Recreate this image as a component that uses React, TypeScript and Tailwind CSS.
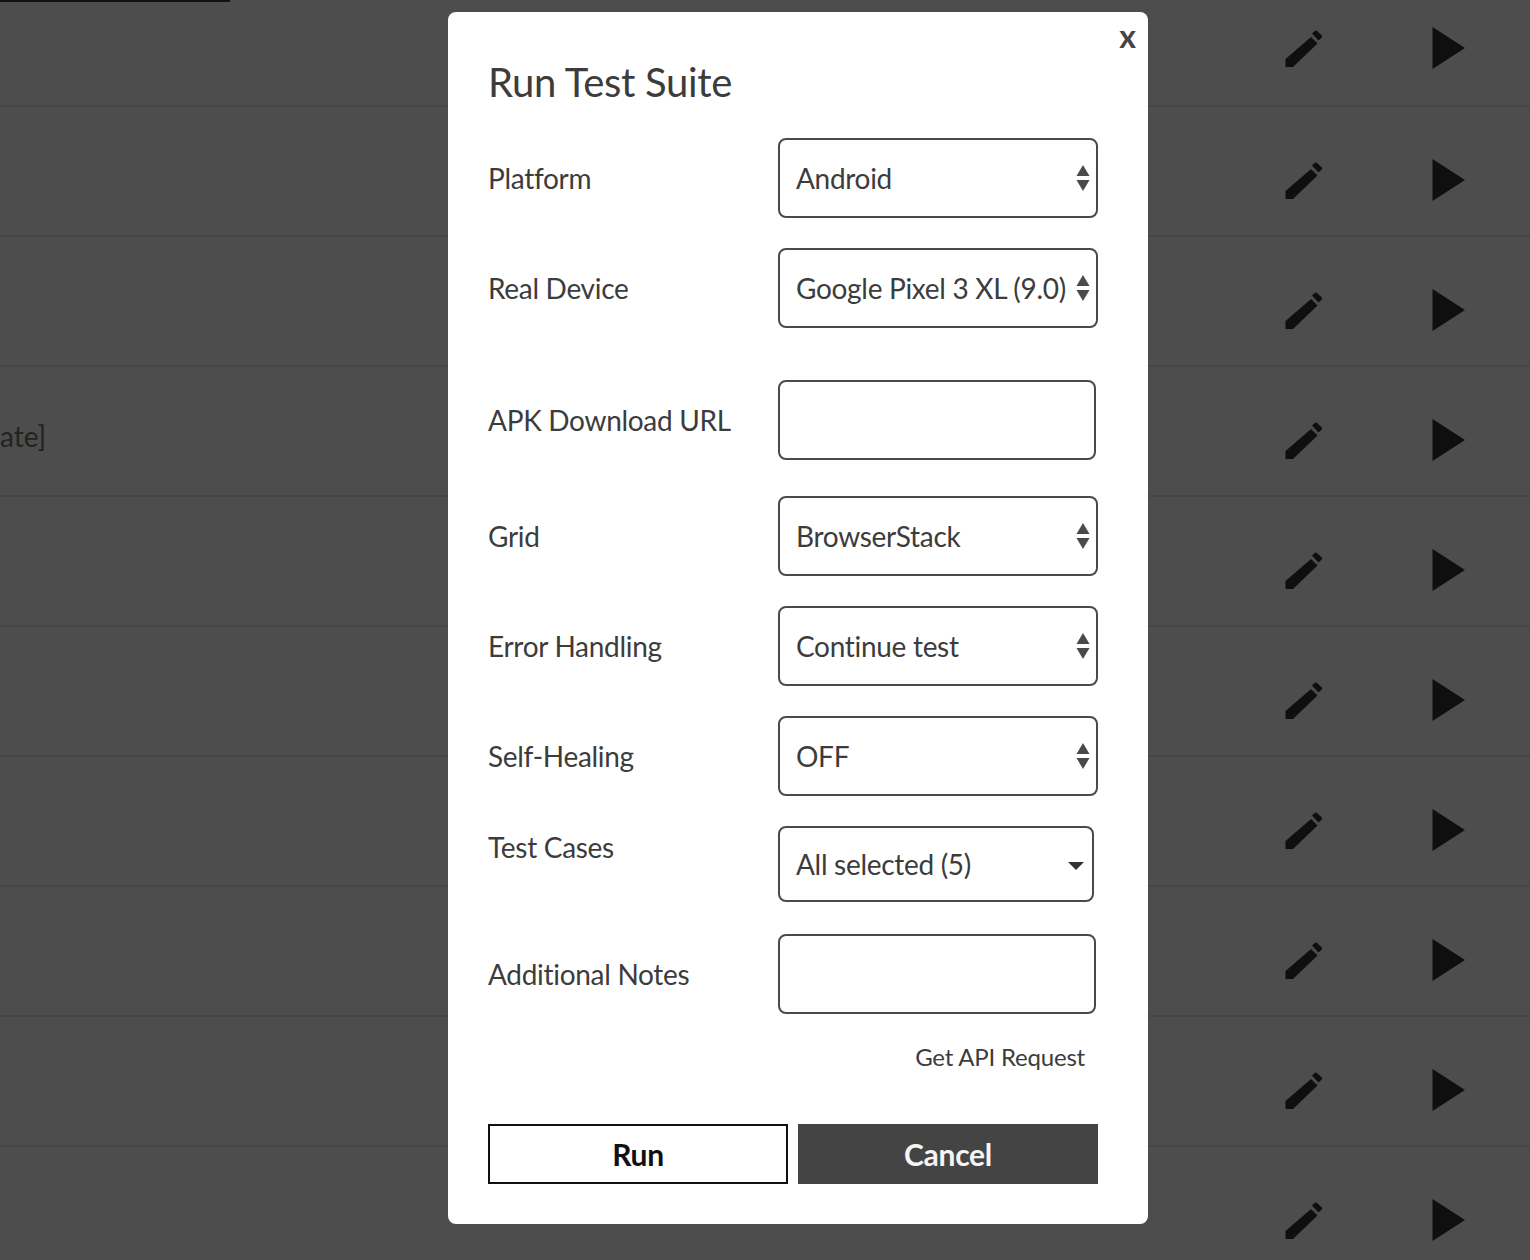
import type { ReactNode } from 'react';

const rows = [0, 1, 2, 3, 4, 5, 6, 7, 8, 9];

function PencilIcon() {
  return (
    <svg width="38" height="38" viewBox="0 0 38 38" className="fill-[#0f0f0f]">
      <path d="M0.5 29 L26 7 L32.5 13.5 L8 37 L0.5 37 Z" />
      <path d="M27 3.5 L30 0.8 Q31 0 32 1 L36.8 5.5 Q37.6 6.5 36.8 7.5 L33.5 10.5 Z" />
    </svg>
  );
}

function PlayIcon() {
  return (
    <svg width="34" height="42" viewBox="0 0 34 42" className="fill-[#0f0f0f]">
      <path d="M0.5 0 L33 21 L0.5 42 Z" />
    </svg>
  );
}

function TableRow({ index }: { index: number }) {
  const first = index === 0;
  return (
    <div
      className={
        first
          ? 'flex h-[105px] shrink-0 items-start border-b-2 border-[#464646] pt-[25px]'
          : 'flex h-[130px] shrink-0 items-start border-b-2 border-[#464646] pt-[52px]'
      }
    >
      <span className="w-[1285px] text-[28px] leading-[34px] text-[#222222]">{index === 3 ? 'ate]' : ''}</span>
      <div className={index === 3 ? 'mt-[3px]' : 'mt-[3px]'}>
        <PencilIcon />
      </div>
      <div className="ml-[109px]">
        <PlayIcon />
      </div>
    </div>
  );
}

function SelectArrows() {
  return (
    <svg width="14" height="26" viewBox="0 0 14 26" className="pointer-events-none absolute right-[8px] top-1/2 -translate-y-1/2 fill-[#4a4a4a]">
      <path d="M7 0 L13.5 11 L0.5 11 Z" />
      <path d="M0.5 15 L13.5 15 L7 26 Z" />
    </svg>
  );
}

function Field({ label, className, children }: { label: string; className: string; children: ReactNode }) {
  return (
    <div className={'flex items-center ' + className}>
      <label className="w-[290px] shrink-0 text-[28px] tracking-[-0.3px] text-[#3c3c3c]">{label}</label>
      {children}
    </div>
  );
}

function SelectBox({ value }: { value: string }) {
  return (
    <div className="relative h-[80px] w-[320px]">
      <select
        defaultValue={value}
        className="h-full w-full appearance-none rounded-[8px] border-2 border-[#4a4a4a] bg-white pl-[16px] text-[28px] tracking-[-0.3px] text-[#3c3c3c]"
      >
        <option>{value}</option>
      </select>
      <SelectArrows />
    </div>
  );
}

function TextBox() {
  return <input type="text" className="h-[80px] w-[318px] rounded-[8px] border-2 border-[#4a4a4a] bg-white" />;
}

export default function App() {
  return (
    <div className="relative h-[1260px] w-[1530px] overflow-hidden bg-[#4d4d4d] font-['Lato',sans-serif]">
      <div className="h-[2px] w-[230px] bg-[#111111]" />
      <div className="flex flex-col">
        {rows.map((i) => (
          <TableRow key={i} index={i} />
        ))}
      </div>

      <div className="absolute left-[448px] top-[12px] flex h-[1212px] w-[700px] flex-col rounded-[8px] bg-white pl-[40px] pr-[50px] pt-[44px]">
        <button className="absolute right-[12px] top-[6px] text-[32px] font-bold leading-[36px] text-[#444444]">x</button>
        <h2 className="text-[40px] leading-[52px] tracking-[-0.3px] text-[#3c3c3c]">Run Test Suite</h2>

        <Field label="Platform" className="mt-[30px]">
          <SelectBox value="Android" />
        </Field>
        <Field label="Real Device" className="mt-[30px]">
          <SelectBox value="Google Pixel 3 XL (9.0)" />
        </Field>
        <Field label="APK Download URL" className="mt-[52px]">
          <TextBox />
        </Field>
        <Field label="Grid" className="mt-[36px]">
          <SelectBox value="BrowserStack" />
        </Field>
        <Field label="Error Handling" className="mt-[30px]">
          <SelectBox value="Continue test" />
        </Field>
        <Field label="Self-Healing" className="mt-[30px]">
          <SelectBox value="OFF" />
        </Field>
        <Field label="Test Cases" className="mt-[30px] items-start">
          <div className="relative flex h-[76px] w-[316px] items-center rounded-[8px] border-2 border-[#4a4a4a] pl-[16px] text-[28px] tracking-[-0.3px] text-[#3c3c3c]">
            All selected (5)
            <span className="absolute right-[8px] top-[34px] h-0 w-0 border-x-[8px] border-t-[8px] border-x-transparent border-t-[#333333]" />
          </div>
        </Field>
        <Field label="Additional Notes" className="mt-[32px]">
          <TextBox />
        </Field>

        <div className="mt-[28px] pr-[13px] text-right text-[24px] leading-[30px] tracking-[-0.2px] text-[#3c3c3c]">Get API Request</div>

        <div className="mt-[52px] flex gap-[10px]">
          <button className="h-[60px] w-[300px] border-2 border-[#111111] bg-white text-[30px] font-bold tracking-[-0.3px] text-[#111111]">Run</button>
          <button className="h-[60px] w-[300px] bg-[#444444] text-[30px] font-bold tracking-[-0.3px] text-[#f5f5f5]">Cancel</button>
        </div>
      </div>
    </div>
  );
}
